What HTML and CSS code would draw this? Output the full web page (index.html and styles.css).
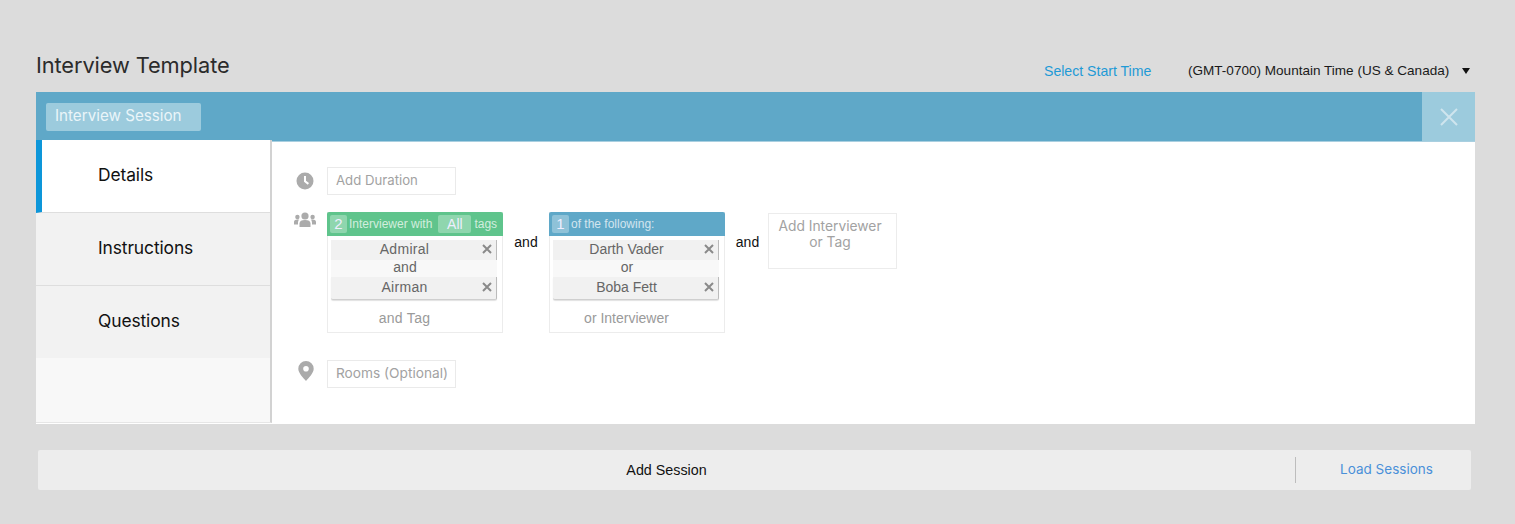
FILE: index.html
```html
<!DOCTYPE html>
<html lang="en">
<head>
<meta charset="utf-8">
<title>Interview Template</title>
<link rel="stylesheet" href="styles.css">
</head>
<body>
<main class="page">
  <header class="top">
    <h1 class="title">Interview Template</h1>
    <a class="start-time">Select Start Time</a>
    <div class="timezone"><span>(GMT-0700) Mountain Time (US &amp; Canada)</span><i class="caret"></i></div>
  </header>
  <section class="panel">
    <div class="bar">
      <div class="session-name">Interview Session</div>
      <button class="close" aria-label="Close"><svg width="20" height="20" viewBox="0 0 20 20"><path d="M2 2 18 18M18 2 2 18" stroke="#cfe5ee" stroke-width="2" fill="none"/></svg></button>
    </div>
    <div class="content">
      <nav class="tabs">
        <div class="tab active">Details</div>
        <div class="tab">Instructions</div>
        <div class="tab">Questions</div>
      </nav>
      <div class="form">
        <div class="row duration">
          <svg class="icon" width="18" height="18" viewBox="0 0 18 18"><circle cx="9" cy="9" r="8.500" fill="#ababab"/><path d="M9 4v5.300l3.400 2.600" stroke="#fff" stroke-width="2" fill="none"/></svg>
          <div class="field">Add Duration</div>
        </div>
        <div class="row people">
          <svg class="icon" width="22" height="16" viewBox="0 0 22 16"><g fill="#ababab"><circle cx="11" cy="4" r="3.600"/><circle cx="3.400" cy="5" r="2.200"/><circle cx="18.600" cy="5" r="2.200"/><path d="M5.500 15v-3.500C5.500 9 7.500 8 11 8s5.500 1 5.500 3.500V15Z"/><path d="M0 12.500V10c0-1.600 1-2.500 3.400-2.500.8 0 1.300.1 1.700.3-.8.7-1.100 1.900-1.100 3.200v1.500Z"/><path d="M22 12.500V10c0-1.600-1-2.500-3.400-2.500-.8 0-1.300.1-1.700.3.800.7 1.100 1.900 1.100 3.200v1.500Z"/></g></svg>
          <div class="card wide">
            <div class="card-head green"><span class="num">2</span><span class="hl">Interviewer with</span><span class="all">All</span><span class="hl">tags</span></div>
            <div class="chips">
              <div class="chip">Admiral<svg class="x" width="10" height="10" viewBox="0 0 10 10"><path d="M1 1 9 9M9 1 1 9"/></svg></div>
              <div class="joiner">and</div>
              <div class="chip">Airman<svg class="x" width="10" height="10" viewBox="0 0 10 10"><path d="M1 1 9 9M9 1 1 9"/></svg></div>
            </div>
            <div class="add">and Tag</div>
          </div>
          <div class="and">and</div>
          <div class="card">
            <div class="card-head blue"><span class="num">1</span><span class="hl">of the following:</span></div>
            <div class="chips">
              <div class="chip">Darth Vader<svg class="x" width="10" height="10" viewBox="0 0 10 10"><path d="M1 1 9 9M9 1 1 9"/></svg></div>
              <div class="joiner">or</div>
              <div class="chip">Boba Fett<svg class="x" width="10" height="10" viewBox="0 0 10 10"><path d="M1 1 9 9M9 1 1 9"/></svg></div>
            </div>
            <div class="add">or Interviewer</div>
          </div>
          <div class="and">and</div>
          <div class="add-box">Add Interviewer<br>or Tag</div>
        </div>
        <div class="row rooms">
          <svg class="icon" width="16" height="20" viewBox="0 0 16 20"><path fill="#ababab" fill-rule="evenodd" d="M8 0a7.700 7.700 0 0 1 7.700 7.700C15.700 12 10.500 17 8 20 5.500 17 .3 12 .3 7.700A7.700 7.700 0 0 1 8 0Zm0 5a2.800 2.800 0 1 0 0 5.600A2.800 2.800 0 0 0 8 5Z"/></svg>
          <div class="field">Rooms (Optional)</div>
        </div>
      </div>
    </div>
  </section>
  <footer class="foot">
    <div class="add-session">Add Session</div>
    <a class="load">Load Sessions</a>
  </footer>
</main>
</body>
</html>
```
FILE: styles.css
```css
* { box-sizing: border-box; }
html, body { margin: 0; height: 100%; }
body { background: #dcdcdc; font-family: "Liberation Sans", Arial, sans-serif; color: #000; overflow: hidden; }
.page { width: 1515px; height: 524px; padding: 0 40px 0 36px; }
.top { height: 92px; display: flex; align-items: flex-end; }
.title { margin: 0 0 12px; font: 400 21.800px/30px Inter, sans-serif; letter-spacing: -0.1px; color: #2b2b2b; flex: 1; }
.start-time { font-size: 14.100px; line-height: 16px; color: #1f9ad6; margin-bottom: 13px; width: 144px; margin-left: -1px; }
.timezone { display: flex; align-items: center; width: 287px; font-size: 13.550px; line-height: 16px; color: #1a1a1a; margin-bottom: 13px; }
.timezone span { width: 274px; white-space: nowrap; }
.caret { width: 0; height: 0; border-left: 4px solid transparent; border-right: 4px solid transparent; border-top: 6px solid #111; }
.panel { width: 1439px; }
.bar { height: 50px; background: #5fa8c8; display: flex; justify-content: space-between; border-bottom: 1px solid #a9cfe0; }
.session-name { margin: 11px 0 0 10px; width: 155px; height: 28px; background: #9ccbdd; border-radius: 2px; color: #eaf5f9; font: 400 15.200px/25px Inter, sans-serif; padding-left: 9px; }
.close { width: 53px; height: 49px; border: 0; padding: 0; background: #9ccbdd; display: flex; align-items: center; justify-content: center; }
.content { display: flex; height: 282px; background: #fff; }
.tabs { width: 236px; margin-top: -2px; background: #f8f8f8; border-right: 2px solid #d2d2d2; border-bottom: 1px solid #e6e6e6; height: 283px; }
.tab { height: 73px; padding-left: 62px; background: #f2f2f2; border-bottom: 1px solid #dedede; font: 400 17.400px/70px Inter, sans-serif; letter-spacing: -0.1px; color: #111; }
.tab:nth-child(3) { height: 72px; border-bottom: 0; }
.tab.active { background: #fff; border-left: 6px solid #0d96d9; padding-left: 56px; line-height: 69px; }
.form { flex: 1; padding: 25px 0 0 22px; }
.row { display: flex; align-items: flex-start; }
.icon { flex: none; }
.field { border: 1px solid #eaeaea; height: 28px; width: 129px; padding-left: 8px; font: 400 13.200px/25px Inter, sans-serif; color: #a2a2a2; white-space: nowrap; }
.rooms .field { font-size: 13.700px; }
.duration .icon { margin: 5px 13px 0 2px; }
.duration { height: 45px; }
.people { height: 148px; }
.people .icon { margin: 0 11px 0 0; }
.card { width: 176px; height: 121px; border: 1px solid #ececec; border-top: 0; }
.card-head { height: 24px; margin: 0 -1px; display: flex; align-items: center; padding: 0 3px; border-radius: 2px 2px 0 0; font-size: 12px; white-space: nowrap; }
.card-head.green { background: #5fc48c; }
.card-head.blue { background: #5fa8c8; }
.hl { color: rgba(255,255,255,.72); margin-left: 2px; }
.num { width: 17px; height: 18px; background: rgba(255,255,255,.3); border-radius: 2px; color: #eef; font-size: 15px; line-height: 18px; text-align: center; }
.all { width: 33px; height: 18px; margin-left: 6px; background: rgba(255,255,255,.3); border-radius: 2px; color: #eef; font-size: 14px; line-height: 18px; text-align: center; }
.all + .hl { margin-left: 3px; }
.chips { margin: 4px 5px 0 3px; background: #f8f8f8; border-radius: 2px; }
.chip { height: 20px; background: #f1f1f1; position: relative; text-align: center; padding-right: 18px; font-size: 14px; line-height: 19px; color: #666; border-right: 1px solid #bbb; }
.chip:last-child { height: 23px; line-height: 21px; border-bottom: 1px solid #cfcfcf; border-radius: 0 0 2px 2px; box-shadow: 0 1px 1px #e2e2e2; }
.joiner { height: 17px; text-align: center; padding-right: 18px; font-size: 14px; line-height: 15px; color: #666; }
.x { position: absolute; right: 4px; top: 4px; fill: none; stroke: #8a8a8a; stroke-width: 2; }
.chip:last-child .x { top: 5px; }
.add { text-align: center; font-size: 14px; line-height: 17px; color: #9a9a9a; margin-top: 10px; padding-right: 21px; }
.wide .chip, .wide .add { letter-spacing: .3px; }
.and { width: 46px; text-align: center; font-size: 14px; line-height: 17px; margin-top: 22px; color: #111; }
.card + .and + .card + .and { width: 43px; padding-left: 2px; }
.add-box { width: 129px; height: 56px; margin-top: 1px; border: 1px solid #ececec; text-align: center; padding: 4px 5px 0 0; font: 400 13.800px/16px Inter, sans-serif; color: #a2a2a2; white-space: nowrap; }
.rooms .icon { margin: 1px 13px 0 4px; }
.foot { margin: 26px 4px 0 2px; height: 40px; width: 1433px; background: #ededed; border-radius: 2px; display: flex; align-items: center; }
.add-session { width: 1257px; text-align: center; font-size: 14.300px; color: #111; }
.load { flex: 1; height: 26px; padding-left: 6px; border-left: 1px solid #bdbdbd; text-align: center; font: 400 13.500px/24px Inter, sans-serif; color: #4a90d9; }
```
